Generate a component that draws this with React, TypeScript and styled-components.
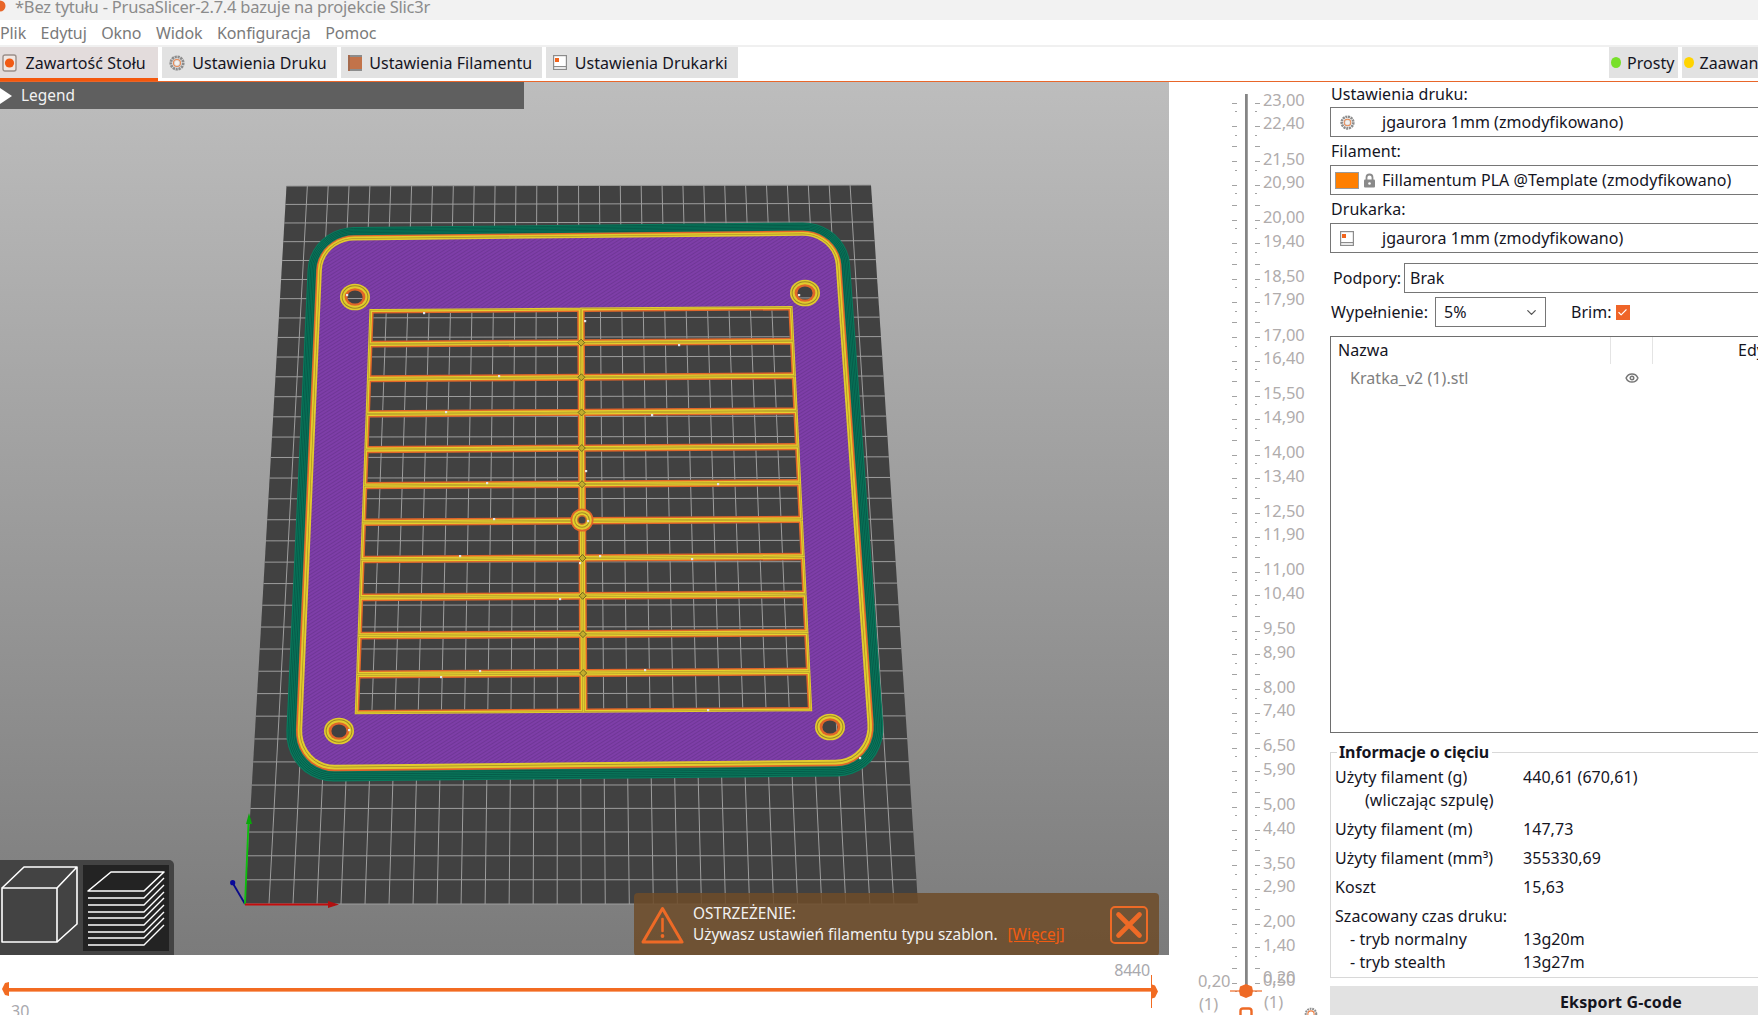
import React from "react";
import styled, { createGlobalStyle } from "styled-components";
import { Check, ChevronDown, Eye } from "lucide-react";

const Global = createGlobalStyle`
  html, body { margin: 0; padding: 0; background: #fff; overflow: hidden; }
  * { box-sizing: border-box; }
`;

const UI = `"Noto Sans", "Open Sans", sans-serif`;

const Page = styled.div`
  width: 1758px; height: 1015px; overflow: hidden; display: flex; flex-direction: column;
  font-family: ${UI}; font-size: 16px; color: #15151f; letter-spacing: 0.05px; background: #fff;
`;
const TitleBar = styled.div`
  height: 20px; flex: none; background: #f2f2f2; color: #8b8b8b; font-size: 16.5px; line-height: 14px;
  display: flex; align-items: flex-start; gap: 9px; overflow: hidden; letter-spacing: -0.22px;
`;
const MenuBar = styled.div`
  height: 27px; flex: none; display: flex; align-items: center; gap: 14.5px; color: #7a7a7a; letter-spacing: -0.1px;
  border-bottom: 2px solid #f0f0f0;
`;
const MenuItem = styled.span`line-height: 24px;`;
const TabBar = styled.div`
  height: 35px; flex: none; display: flex; align-items: flex-start; border-bottom: 1px solid #e8662a; overflow: hidden;
`;
const TabGroup = styled.div<{ $w?: number }>`
  display: flex; gap: 4px; align-items: flex-start; flex: none; width: ${p => (p.$w ? p.$w + "px" : "auto")};
`;
const Tab = styled.div<{ $active?: boolean }>`
  height: ${p => (p.$active ? "34px" : "31px")}; display: flex; align-items: center; gap: 7.5px; padding: 0 ${p => (p.$active ? "12px" : "10px")} 0 ${p => (p.$active ? "2px" : "7px")};
  background: ${p => (p.$active ? "#e3dcdc" : "#e2e2e2")};
  border-bottom: ${p => (p.$active ? "3px solid #f4570c" : "none")};
  white-space: nowrap; flex: none;
`;
const ModeTab = styled(Tab)`padding: 0 3px 0 2px; gap: 6px;`;
const ModeDot = styled.span<{ $c: string }>`width: 10px; height: 11px; border-radius: 50%; background: ${p => p.$c}; flex: none;`;

const Main = styled.div`flex: 1; min-height: 0; display: flex;`;
const LeftCol = styled.div`width: 1169px; flex: none; display: flex; flex-direction: column;`;
const Canvas = styled.div`
  height: 873px; flex: none; position: relative; overflow: hidden;
  background: linear-gradient(#bdbdbd, #7b7b7b);
`;
const SceneSvg = styled.svg`display: block; width: 1169px; height: 873px;`;
const Legend = styled.div`
  position: absolute; left: 0; top: 0; width: 524px; height: 27px; background: #5f5f5f; color: #f2f2f2;
  display: flex; align-items: center; gap: 9px; font-size: 15.4px; letter-spacing: 0;
`;
const ViewBar = styled.div`
  position: absolute; left: 0; bottom: 0; width: 174px; height: 95px; background: #434343; border-top-right-radius: 5px;
  display: flex; align-items: flex-start; padding-top: 5px;
`;
const ViewTile = styled.div<{ $active?: boolean }>`
  width: ${p => (p.$active ? "86px" : "83px")}; height: 86px; flex: none; background: ${p => (p.$active ? "#232323" : "transparent")};
  svg { display: block; }
`;
const Note = styled.div`
  position: absolute; left: 634px; top: 811px; width: 525px; height: 63px; border-radius: 4px;
  background: rgba(109, 76, 41, 0.86); color: #f1f1f1; font-size: 15.4px; line-height: 21px; letter-spacing: 0;
  display: flex; align-items: center; padding-left: 7px;
`;
const NoteText = styled.div`margin-left: 9px; flex: 1; padding-bottom: 2px;`;
const NoteLink = styled.a`color: #f15c12; text-decoration: underline; margin-left: 6px;`;
const NoteClose = styled.div`
  width: 38px; height: 38px; flex: none; margin-right: 11px; border: 2px solid #ee6a26; border-radius: 5px;
  display: flex; align-items: center; justify-content: center;
`;

const HSlider = styled.div`flex: 1; display: flex; flex-direction: column; overflow: hidden; color: #a9a9ae;`;
const HTop = styled.div`height: 24px; flex: none; padding: 6px 19px 0 0; text-align: right; font-size: 16px; line-height: 18px; letter-spacing: -0.2px;`;
const HRailRow = styled.div`height: 21px; flex: none; position: relative; display: flex; align-items: center; padding: 0 17px 0 8px;`;
const HRail = styled.div`flex: 1; height: 4px; background: #f26b21; border-bottom: 1px solid #f7a274;`;
const HHandleL = styled.svg`position: absolute; left: 2px; top: 3px;`;
const HHandleR = styled.svg`position: absolute; left: 1150px; top: -4px;`;
const HBottom = styled.div`margin-top: 2px; padding-left: 11px; font-size: 16px; line-height: 18px;`;

const VSlider = styled.div`width: 161px; flex: none; position: relative; padding: 12px 0 0 63px; overflow: hidden;`;
const TickRow = styled.div`height: 11.74px; display: grid; grid-template-columns: 5px 8px 3px 7px 5px auto; align-items: center;`;
const Tick = styled.i<{ $long: boolean; $end?: boolean }>`
  display: block; height: 1px; background: #a3a3a3; width: ${p => (p.$long ? "5px" : "2px")}; justify-self: ${p => (p.$end ? "end" : "start")};
`;
const Rail = styled.i<{ $off?: boolean }>`
  display: block; height: 100%; background: ${p => (p.$off ? "transparent" : "linear-gradient(90deg, #858585 60%, #b5b5b5)")}; grid-column: 3;
`;
const TickLabel = styled.span`
  margin-left: 3px; padding-bottom: 7px; color: #b0acac; font-size: 16.5px; line-height: 11px; white-space: nowrap; letter-spacing: -0.1px;
`;
const Floating = styled.span<{ $x: number; $y: number }>`
  position: absolute; left: ${p => p.$x}px; top: ${p => p.$y}px; color: #b0acac; font-size: 16.5px; line-height: 20px; white-space: nowrap; letter-spacing: -0.1px;
`;
const FloatIcon = styled.svg<{ $x: number; $y: number }>`position: absolute; left: ${p => p.$x}px; top: ${p => p.$y}px;`;

const Sidebar = styled.div`width: 582px; flex: none; display: flex; flex-direction: column;`;
const FieldLabel = styled.div<{ $h: number }>`height: ${p => p.$h}px; flex: none; padding-left: 1px; line-height: ${p => (p.$h === 25 ? 24 : 28)}px;`;
const Combo = styled.div`
  height: 30px; flex: none; width: 570px; border: 1px solid #767676; display: flex; align-items: center; white-space: nowrap; background: #fff;
`;
const ComboIcon = styled.span`width: 51px; flex: none; display: flex; align-items: center; gap: 4px; padding-left: 4px;`;
const ComboIconInset = styled(ComboIcon)`padding-left: 9px;`;
const Swatch = styled.span`width: 24px; height: 17px; background: #ff7f00; border: 1px solid #9a9a9a; flex: none;`;
const Row = styled.div<{ $mt: number }>`display: flex; align-items: center; height: 30px; flex: none; margin-top: ${p => p.$mt}px;`;
const RowLabel = styled.span<{ $w: number; $pl: number }>`width: ${p => p.$w}px; padding-left: ${p => p.$pl}px; flex: none; white-space: nowrap;`;
const PlainCombo = styled(Combo)<{ $w: number }>`width: ${p => p.$w}px; padding-left: 5px;`;
const SmallCombo = styled(PlainCombo)`padding: 0 6px 0 8px; justify-content: space-between; svg { color: #555; }`;
const BrimLabel = styled.span`margin-left: 25px;`;
const CheckBox = styled.span`
  width: 14px; height: 15px; margin-left: 4px; background: #ef6428; display: flex; align-items: center; justify-content: center; color: #fff; flex: none;
`;
const ObjectList = styled.div`
  height: 397px; width: 570px; flex: none; margin-top: 9px; border: 1px solid #6e6e6e; display: flex; flex-direction: column;
`;
const ListHead = styled.div`height: 27px; flex: none; display: grid; grid-template-columns: 280px 42px 1fr; align-items: center;`;
const HeadCell = styled.div<{ $div?: boolean }>`
  height: 100%; padding-left: ${p => (p.$div ? "85px" : "7px")}; line-height: 26px; border-right: 1px solid #e4e4e4; white-space: nowrap; overflow: hidden;
`;
const ListRow = styled.div`height: 28px; display: grid; grid-template-columns: 280px 42px 1fr; align-items: center; color: #808080;`;
const RowName = styled.span`padding-left: 19px;`;
const RowEye = styled.span`display: flex; justify-content: center; color: #767676;`;
const InfoBox = styled.fieldset`
  width: 570px; height: 238px; flex: none; margin: 7px 0 0; padding: 2px 0 0 4px; border: 1px solid #d8d8d8; min-width: 0;
`;
const InfoTitle = styled.legend`font-weight: 700; padding: 0 3px 0 2px; margin-left: 2px; line-height: 24px; letter-spacing: -0.1px;`;
const InfoRow = styled.div<{ $mt?: number }>`
  display: grid; grid-template-columns: 188px 1fr; height: 23px; line-height: 23px; margin-top: ${p => p.$mt ?? 0}px; white-space: nowrap;
`;
const Indent = styled.span<{ $x: number }>`padding-left: ${p => p.$x}px;`;
const ExportBtn = styled.div`
  flex: none; height: 30px; width: 582px; margin-top: 8px; background: #e2e2e2; font-weight: 700; text-align: center; line-height: 32px; letter-spacing: 0.15px;
`;

/* ---------- icons ---------- */
const GearIcon = ({ s = 16 }: { s?: number }) => (
  <svg width={s} height={s} viewBox="0 0 16 16" style={{ flex: "none" }}>
    <circle cx="8" cy="8" r="6.2" fill="none" stroke="#8c8c8c" strokeWidth="2.8" strokeDasharray="2.2 0.7" />
    <circle cx="8" cy="8" r="4.4" fill="#d9d9d9" />
    <circle cx="8" cy="8" r="3.5" fill="none" stroke="#e98a55" strokeWidth="1.1" />
    <circle cx="8" cy="8" r="2.2" fill="#f3f0ee" />
  </svg>
);
const PlaterIcon = () => (
  <svg width="16" height="18" viewBox="0 0 16 18" style={{ flex: "none" }}>
    <rect x="1" y="1" width="13" height="16" rx="2" fill="#f1e7e2" stroke="#9a8f8a" strokeWidth="1.4" />
    <circle cx="7.5" cy="9" r="4.6" fill="#f15a14" />
  </svg>
);
const FilamentTabIcon = () => (
  <svg width="14" height="18" viewBox="0 0 14 18" style={{ flex: "none" }}>
    <rect x="0" y="1" width="14" height="16" fill="#c2734a" />
    <rect x="0" y="1" width="14" height="2" fill="#8c8c8c" />
    <rect x="0" y="15" width="14" height="2" fill="#8c8c8c" />
    <rect x="0" y="1" width="2" height="16" fill="#a56a4d" />
  </svg>
);
const PrinterIcon = () => (
  <svg width="14" height="15" viewBox="0 0 14 15" style={{ flex: "none" }}>
    <rect x="0.6" y="0.6" width="12.8" height="13.8" fill="#fff" stroke="#8c8c8c" strokeWidth="1.2" />
    <rect x="0.6" y="11" width="12.8" height="1.2" fill="#8c8c8c" />
    <rect x="2" y="3" width="4" height="4" fill="#f2641c" />
  </svg>
);
const LockIcon = () => (
  <svg width="13" height="15" viewBox="0 0 13 15">
    <path d="M3.5 7V4.5a3 3 0 0 1 6 0V7" fill="none" stroke="#8a8a8a" strokeWidth="1.8" />
    <rect x="1" y="6.5" width="11" height="8" rx="1" fill="#8a8a8a" />
    <circle cx="6.5" cy="10.5" r="1.3" fill="#fff" />
  </svg>
);
const Triangle = () => (
  <svg width="12" height="16" viewBox="0 0 12 16"><path d="M0 0L12 8L0 16Z" fill="#fff" /></svg>
);
const CubeIcon = () => (
  <svg width="80" height="80" viewBox="0 0 80 80" fill="none" stroke="#fff" strokeWidth="1.6" strokeLinejoin="round">
    <rect x="2" y="23" width="55" height="54" />
    <path d="M2 23L24 2H77L57 23M77 2V59L57 77" />
  </svg>
);
const LayersIcon = () => (
  <svg width="86" height="86" viewBox="83 865 86 86" fill="none" stroke="#fff" strokeLinejoin="round">
    <path d="M88 891L111 872H164L144 891Z" strokeWidth="1.6" />
    {[898, 905, 912, 918, 925, 932, 938, 945].map(y => (
      <path key={y} d={`M88 ${y}H144L164 ${y - 20}`} strokeWidth="1.4" />
    ))}
  </svg>
);
const WarnIcon = () => (
  <svg width="43" height="38" viewBox="0 0 43 38" fill="none">
    <path d="M21.5 2.5L41 36H2Z" stroke="#ee6a26" strokeWidth="3" strokeLinejoin="round" />
    <path d="M21.5 13V25" stroke="#ee6a26" strokeWidth="2.6" strokeLinecap="round" />
    <circle cx="21.5" cy="30" r="1.9" fill="#ee6a26" />
  </svg>
);
const CloseX = () => (
  <svg width="28" height="28" viewBox="0 0 24 24"><path d="M3 3L21 21M21 3L3 21" stroke="#ee6a26" strokeWidth="4" strokeLinecap="round" /></svg>
);

/* ---------- 3D scene ---------- */
type P = [number, number];
function homography(q: P[]) {
  const [[x0, y0], [x1, y1], [x2, y2], [x3, y3]] = q;
  const dx1 = x1 - x2, dx2 = x3 - x2, sx = x0 - x1 + x2 - x3;
  const dy1 = y1 - y2, dy2 = y3 - y2, sy = y0 - y1 + y2 - y3;
  const den = dx1 * dy2 - dx2 * dy1;
  const g = (sx * dy2 - dx2 * sy) / den, h = (dx1 * sy - sx * dy1) / den;
  const a = x1 - x0 + g * x1, b = x3 - x0 + h * x3, d = y1 - y0 + g * y1, e = y3 - y0 + h * y3;
  return (u: number, v: number): P => {
    const w = g * u + h * v + 1;
    return [(a * u + b * v + x0) / w, (d * u + e * v + y0) / w];
  };
}
const poly = (pts: P[]) => "M" + pts.map(p => `${p[0].toFixed(2)} ${p[1].toFixed(2)}`).join("L") + "Z";

const bed = homography([[286.5, 186], [871, 185], [918, 904], [245, 904]]);
const COLS = 28, ROWS = 34;
const printMap = homography([[309.5, 227.5], [847, 222], [887, 776], [284, 782]]);
const PW = 560, PH = 550;
function rr(inset: number, r: number): string {
  const pts: P[] = [];
  const x0 = inset, y0 = inset, x1 = PW - inset, y1 = PH - inset;
  const corners: [number, number, number][] = [
    [x1 - r, y0 + r, -90], [x1 - r, y1 - r, 0], [x0 + r, y1 - r, 90], [x0 + r, y0 + r, 180],
  ];
  corners.forEach(([cx, cy, a0]) => {
    for (let i = 0; i <= 10; i++) {
      const a = ((a0 + i * 9) * Math.PI) / 180;
      pts.push([cx + r * Math.cos(a), cy + r * Math.sin(a)]);
    }
  });
  return poly(pts.map(p => printMap(p[0] / PW, p[1] / PH)));
}
const lat = homography([[370, 310], [792, 307], [812, 711], [355, 714]]);
const CELL_ROWS = 11;
const cellPaths: string[] = [];
for (let r = 0; r < CELL_ROWS; r++) {
  for (let c = 0; c < 2; c++) {
    const du = 3.8 / 430, dv = 3.7 / 404;
    const u0 = c / 2 + du, u1 = (c + 1) / 2 - du, v0 = r / CELL_ROWS + dv, v1 = (r + 1) / CELL_ROWS - dv;
    cellPaths.push(poly([lat(u0, v0), lat(u1, v0), lat(u1, v1), lat(u0, v1)]));
  }
}
const cellD = cellPaths.join(" ");
const screws: P[] = [[355, 297], [805, 293], [339, 731], [830, 727]];
const seams: P[] = [[423, 312], [584, 320], [498, 375], [445, 411], [651, 414], [486, 482], [493, 518], [587, 520], [599, 555], [579, 562], [559, 598], [585, 470], [678, 344], [717, 483], [459, 555], [691, 558], [479, 670], [644, 669], [707, 709], [440, 676], [859, 757], [348, 729], [798, 294], [346, 294]];

const BedLayer = () => {
  const lines: string[] = [];
  for (let i = 1; i < COLS; i++) { const a = bed(i / COLS, 0), b = bed(i / COLS, 1); lines.push(`M${a[0]} ${a[1]}L${b[0]} ${b[1]}`); }
  for (let i = 0; i <= ROWS; i++) { const a = bed(0, i / ROWS), b = bed(1, i / ROWS); lines.push(`M${a[0]} ${a[1]}L${b[0]} ${b[1]}`); }
  return (
    <g>
      <path d={poly([bed(0, 0), bed(1, 0), bed(1, 1), bed(0, 1)])} fill="#414141" />
      <path d={lines.join("")} stroke="#9d9d9d" strokeWidth="1" fill="none" />
    </g>
  );
};

const Ring = ({ c, rx, ry }: { c: P; rx: number; ry: number }) => (
  <g>
    <ellipse cx={c[0]} cy={c[1]} rx={rx} ry={ry} fill="#e2cb2e" />
    <ellipse cx={c[0]} cy={c[1]} rx={rx - 1.6} ry={ry - 1.6} fill="#9c8a26" />
    <ellipse cx={c[0]} cy={c[1]} rx={rx - 2.6} ry={ry - 2.6} fill="#e2cb2e" />
    <ellipse cx={c[0]} cy={c[1]} rx={rx - 4.6} ry={ry - 4.6} fill="#e0662a" />
  </g>
);

const Scene = () => (
  <SceneSvg viewBox="0 82 1169 873">
    <defs>
      <pattern id="hatch" width="3" height="3" patternUnits="userSpaceOnUse" patternTransform="rotate(-32)">
        <rect width="3" height="3" fill="#7e3ea8" />
        <rect width="3" height="1" fill="#6f3696" />
      </pattern>
      <clipPath id="holes">
        <path d={cellD} />
        {screws.map((c, i) => <ellipse key={i} cx={c[0]} cy={c[1]} rx="7.6" ry="6.6" />)}
      </clipPath>
    </defs>
    <BedLayer />
    <path d={rr(0, 46)} fill="#0a7a5d" />
    {[1.6, 3.2, 4.8, 6.4, 8].map(i => <path key={i} d={rr(i, 46 - i)} fill="none" stroke="#055645" strokeWidth="0.8" />)}
    <path d={rr(9, 38)} fill="#e0662a" />
    <path d={rr(10.6, 36)} fill="#e2cb2e" />
    <path d={rr(12.4, 34.5)} fill="#a08c26" />
    <path d={rr(13, 34)} fill="#e2cb2e" />
    <path d={rr(14.8, 32)} fill="url(#hatch)" />
    <g fill="none" strokeLinejoin="miter">
      <path d={cellD} stroke="#e2cb2e" strokeWidth="8.6" />
      <path d={cellD} stroke="#a8932a" strokeWidth="6.6" />
      <path d={cellD} stroke="#e6cf2e" strokeWidth="5.6" />
      <path d={cellD} stroke="#e0662a" strokeWidth="3" />
    </g>
    {screws.map((c, i) => <Ring key={i} c={c} rx={15} ry={13.3} />)}
    <g clipPath="url(#holes)"><BedLayer /></g>
    {Array.from({ length: CELL_ROWS - 1 }, (_, k) => {
      const [x, y] = lat(0.5, (k + 1) / CELL_ROWS);
      return k === 5 ? null : <path key={k} d={`M${x - 3.5} ${y}L${x} ${y - 3.5}L${x + 3.5} ${y}L${x} ${y + 3.5}Z`} fill="#c4ad2b" stroke="#5c5420" strokeWidth="0.8" />;
    })}
    <circle cx="582" cy="520" r="11.5" fill="#e0662a" />
    <circle cx="582" cy="520" r="9.8" fill="#e2cb2e" />
    <circle cx="582" cy="520" r="7.8" fill="#a08c26" />
    <circle cx="582" cy="520" r="6.8" fill="#e6cf2e" />
    <circle cx="582" cy="520" r="5" fill="#d0702a" />
    <circle cx="582" cy="520" r="3.6" fill="#444" />
    <g fill="#e4e4e4">{seams.map((s, i) => <rect key={i} x={s[0]} y={s[1]} width="2.2" height="2.2" />)}</g>
    <path d="M245 904L232.7 883" stroke="#0a0a8a" strokeWidth="1.8" />
    <circle cx="232.7" cy="882.7" r="2.6" fill="#0a0a9a" />
    <path d="M245 904L248.6 820" stroke="#0cc00c" strokeWidth="1.8" />
    <path d="M249 813L246 824H252Z" fill="#0aa80a" />
    <path d="M245 904.5H330" stroke="#c40c0c" strokeWidth="1.8" />
    <path d="M339 904.5L328 901V908Z" fill="#b01010" />
  </SceneSvg>
);

/* ---------- vertical slider ---------- */
const TICKS = Array.from({ length: 77 }, (_, i) => {
  const m = i % 5;
  return {
    i,
    long: m === 0 || m === 2 || m === 4,
    label: i < 76 && (m === 0 || m === 2) ? (23 - 0.3 * i).toFixed(2).replace(".", ",") : null,
  };
});

export default function App() {
  return (
    <Page>
      <Global />
      <TitleBar>
        <svg width="6" height="14" viewBox="0 0 6 14" style={{ flex: "none" }}><circle cx="0" cy="6" r="5.5" fill="#e8662a" /></svg>
        <span>*Bez tytułu - PrusaSlicer-2.7.4 bazuje na projekcie Slic3r</span>
      </TitleBar>
      <MenuBar>
        <MenuItem>Plik</MenuItem><MenuItem>Edytuj</MenuItem><MenuItem>Okno</MenuItem>
        <MenuItem>Widok</MenuItem><MenuItem>Konfiguracja</MenuItem><MenuItem>Pomoc</MenuItem>
      </MenuBar>
      <TabBar>
        <TabGroup $w={1609}>
          <Tab $active><PlaterIcon />Zawartość Stołu</Tab>
          <Tab><GearIcon />Ustawienia Druku</Tab>
          <Tab><FilamentTabIcon />Ustawienia Filamentu</Tab>
          <Tab><PrinterIcon />Ustawienia Drukarki</Tab>
        </TabGroup>
        <TabGroup>
          <ModeTab><ModeDot $c="#78e02a" />Prosty</ModeTab>
          <ModeTab><ModeDot $c="#ffd400" />Zaawansowany</ModeTab>
        </TabGroup>
      </TabBar>
      <Main>
        <LeftCol>
          <Canvas>
            <Scene />
            <Legend><Triangle />Legend</Legend>
            <ViewBar>
              <ViewTile><CubeIcon /></ViewTile>
              <ViewTile $active><LayersIcon /></ViewTile>
            </ViewBar>
            <Note>
              <WarnIcon />
              <NoteText>
                OSTRZEŻENIE:<br />
                Używasz ustawień filamentu typu szablon. <NoteLink>[Więcej]</NoteLink>
              </NoteText>
              <NoteClose><CloseX /></NoteClose>
            </Note>
          </Canvas>
          <HSlider>
            <HTop>8440</HTop>
            <HRailRow>
              <HHandleL width="7" height="14" viewBox="0 0 7 14"><path d="M0 7L3 1L7 0V14L3 13Z" fill="#f26b21" /></HHandleL>
              <HRail />
              <HHandleR width="9" height="33" viewBox="0 0 9 33">
                <path d="M1.5 0V33" stroke="#f26b21" strokeWidth="1" />
                <path d="M2 9.5L5 10.5L8 16.5L5 22.5L2 23.5Z" fill="#f26b21" />
              </HHandleR>
            </HRailRow>
            <HBottom>30</HBottom>
          </HSlider>
        </LeftCol>
        <VSlider>
          {TICKS.map(t => (
            <TickRow key={t.i}>
              <Tick $long={t.long} $end />
              <Rail $off={t.i === 76} />
              <i />
              <Tick $long={t.long} />
              {t.label && <TickLabel>{t.label}</TickLabel>}
            </TickRow>
          ))}
          <Floating $x={94} $y={885}>0,20</Floating>
          <Floating $x={29} $y={889}>0,20</Floating>
          <Floating $x={30} $y={912}>(1)</Floating>
          <Floating $x={95} $y={910}>(1)</Floating>
          <FloatIcon $x={61} $y={901} width="34" height="16" viewBox="0 0 34 16">
            <path d="M0 8H32" stroke="#ee6a26" strokeWidth="1.2" />
            <path d="M16 1L22 3.5L23 8L22 12.5L16 15L10 12.5L9 8L10 3.5Z" fill="#ee6a26" />
          </FloatIcon>
          <FloatIcon $x={70} $y={925} width="14" height="10" viewBox="0 0 14 10">
            <path d="M1.5 10V4Q1.5 1.5 4 1.5H10Q12.5 1.5 12.5 4V10" fill="none" stroke="#ee6a26" strokeWidth="2.4" />
          </FloatIcon>
          <FloatIcon $x={135} $y={925} width="14" height="14" viewBox="0 0 16 16">
            <circle cx="8" cy="8" r="6" fill="none" stroke="#8f8f8f" strokeWidth="2.4" strokeDasharray="2 0.9" />
            <circle cx="8" cy="8" r="3.6" fill="none" stroke="#ee7b3c" strokeWidth="1.2" />
          </FloatIcon>
        </VSlider>
        <Sidebar>
          <FieldLabel $h={25}>Ustawienia druku:</FieldLabel>
          <Combo><ComboIconInset><GearIcon s={15} /></ComboIconInset>jgaurora 1mm (zmodyfikowano)</Combo>
          <FieldLabel $h={28}>Filament:</FieldLabel>
          <Combo><ComboIcon><Swatch /><LockIcon /></ComboIcon>Fillamentum PLA @Template (zmodyfikowano)</Combo>
          <FieldLabel $h={28}>Drukarka:</FieldLabel>
          <Combo><ComboIconInset><PrinterIcon /></ComboIconInset>jgaurora 1mm (zmodyfikowano)</Combo>
          <Row $mt={10}>
            <RowLabel $w={74} $pl={3}>Podpory:</RowLabel>
            <PlainCombo $w={496}>Brak</PlainCombo>
          </Row>
          <Row $mt={4}>
            <RowLabel $w={105} $pl={1}>Wypełnienie:</RowLabel>
            <SmallCombo $w={111}>5%<ChevronDown size={15} strokeWidth={2} /></SmallCombo>
            <BrimLabel>Brim:</BrimLabel>
            <CheckBox><Check size={11} strokeWidth={2.4} /></CheckBox>
          </Row>
          <ObjectList>
            <ListHead>
              <HeadCell>Nazwa</HeadCell>
              <HeadCell />
              <HeadCell $div>Edytowanie</HeadCell>
            </ListHead>
            <ListRow>
              <RowName>Kratka_v2 (1).stl</RowName>
              <RowEye><Eye size={14} strokeWidth={2.6} /></RowEye>
            </ListRow>
          </ObjectList>
          <InfoBox>
            <InfoTitle>Informacje o cięciu</InfoTitle>
            <InfoRow><span>Użyty filament (g)</span><span>440,61 (670,61)</span></InfoRow>
            <InfoRow><Indent $x={30}>(wliczając szpulę)</Indent><span /></InfoRow>
            <InfoRow $mt={6}><span>Użyty filament (m)</span><span>147,73</span></InfoRow>
            <InfoRow $mt={6}><span>Użyty filament (mm³)</span><span>355330,69</span></InfoRow>
            <InfoRow $mt={6}><span>Koszt</span><span>15,63</span></InfoRow>
            <InfoRow $mt={6}><span>Szacowany czas druku:</span><span /></InfoRow>
            <InfoRow><Indent $x={15}>- tryb normalny</Indent><span>13g20m</span></InfoRow>
            <InfoRow><Indent $x={15}>- tryb stealth</Indent><span>13g27m</span></InfoRow>
          </InfoBox>
          <ExportBtn>Eksport G-code</ExportBtn>
        </Sidebar>
      </Main>
    </Page>
  );
}
